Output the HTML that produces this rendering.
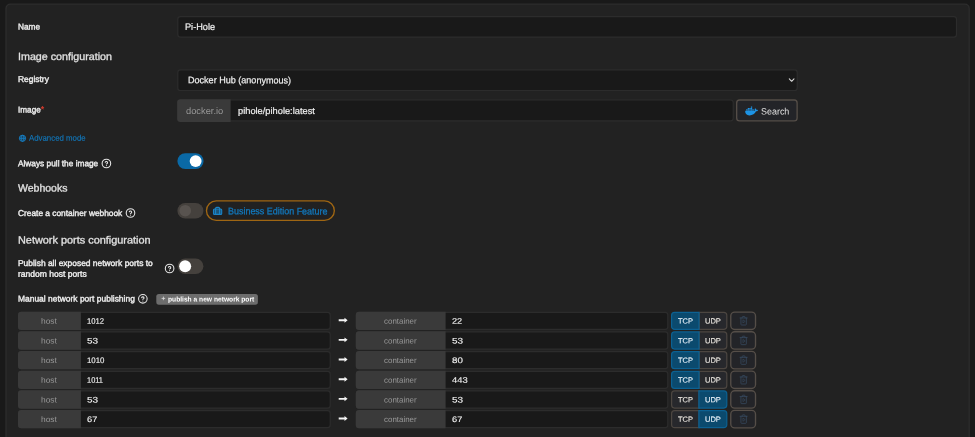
<!DOCTYPE html>
<html lang="en">
<head>
<meta charset="utf-8">
<title>Create container</title>
<style>
*{box-sizing:border-box;margin:0;padding:0}
html,body{width:975px;height:437px;overflow:hidden;background:#191919}
body{position:relative;font-family:"Liberation Sans",sans-serif;color:#e6e6e6}
.bg{position:absolute;left:0;top:0;display:block}
.txt{position:absolute;left:0;top:0;width:975px;height:437px;filter:blur(0.3px);text-rendering:geometricPrecision}
.t{position:absolute;transform-origin:0 0;white-space:nowrap;line-height:12px;height:12px}
.lbl{color:#ececec;-webkit-text-stroke:0.4px #ececec}
.h{color:#e2e2e2;-webkit-text-stroke:0.3px #e2e2e2}
.val{color:#f0f0f0;-webkit-text-stroke:0.2px #f0f0f0}
.val2{color:#e2e2e2}
.gray{color:#989898}
.pv{color:#f2f2f2;-webkit-text-stroke:0.12px #f2f2f2}
.blue{color:#1277ba;-webkit-text-stroke:0.3px #1277ba}
.adv{-webkit-text-stroke:0.15px #1277ba}
.req{color:#e23d2e;-webkit-text-stroke:0.15px #e23d2e;font-size:1.1em}
.pbt{color:#ffffff;font-weight:bold}
.son{color:#e4eef6;-webkit-text-stroke:0.15px #e4eef6}
.soff{color:#e6e2dc;-webkit-text-stroke:0.15px #e6e2dc}
</style>
</head>
<body>
<svg class="bg" width="975" height="437" viewBox="0 0 975 437">
<rect x="6" y="4.1" width="963.2" height="458.7" rx="4.35" fill="#222222" stroke="#2d2d2d" stroke-width="1.3"/>
<rect x="177.8" y="16.6" width="778.7" height="20.5" rx="2.6" fill="#191919" stroke="#2c2c2c" stroke-width="1.2"/>
<rect x="177.8" y="69.8" width="619.4" height="20.7" rx="2.6" fill="#191919" stroke="#2c2c2c" stroke-width="1.2"/>
<path d="M789.3 78.900 L791.650 81.300 L794 78.900" fill="none" stroke="#dcdcdc" stroke-width="1.050" stroke-linecap="round" stroke-linejoin="round"/>
<rect x="177.8" y="100" width="555.4" height="20.8" rx="2.6" fill="#191919" stroke="#2c2c2c" stroke-width="1.2"/>
<path d="M180.4 99.3H230.6V121.9H180.4A3.2 3.2 0 0 1 177.2 118.7V102.5A3.2 3.2 0 0 1 180.4 99.3z" fill="#3a3a3a"/>
<rect x="736.67" y="99.97" width="60.45" height="20.95" rx="2.92" fill="#232428" stroke="#544d47" stroke-width="1.35"/>
<rect x="177.4" y="153.2" width="26.2" height="15.8" rx="7.9" fill="#0a69a6"/>
<circle cx="195.65" cy="161.1" r="5.95" fill="#ffffff"/>
<rect x="177.4" y="202.9" width="26" height="15.6" rx="7.8" fill="#45413d"/>
<circle cx="185.25" cy="210.7" r="5.8" fill="#58534f"/>
<rect x="177.5" y="258.4" width="25.9" height="15.6" rx="7.8" fill="#45413d"/>
<circle cx="185.15" cy="266.2" r="6" fill="#ffffff"/>
<rect x="206.48" y="200.88" width="127.85" height="19.55" rx="9.77" fill="#212121" stroke="#9f6613" stroke-width="1.35"/>
<g fill="none" stroke="#1a84c7" stroke-width="1.1" stroke-linejoin="round"><rect x="213.5" y="209" width="8.2" height="5.4" rx="1" fill="#1a84c7" fill-opacity="0.55"/><path d="M215.6 214.4V208.4a1 1 0 0 1 1-1h2a1 1 0 0 1 1 1v6"/></g>
<rect x="156.3" y="293.9" width="101.6" height="10.8" rx="2.6" fill="#6d6d6d"/>
<path d="M161.6 298.4h3.6M163.4 296.6v3.6" stroke="#e0e0e0" stroke-width="0.8" fill="none"/>
<g transform="translate(101.55 158.65) scale(0.4042)" fill="none" stroke="#e6e6e6" stroke-width="2.700" stroke-linecap="round" stroke-linejoin="round"><circle cx="12" cy="12" r="10.600"/><path d="M9.100 9a3 3 0 0 1 5.800 1c0 2-3 3-3 3"/><path d="M12 17.200h.01"/></g>
<g transform="translate(125.65 208.15) scale(0.4042)" fill="none" stroke="#e6e6e6" stroke-width="2.700" stroke-linecap="round" stroke-linejoin="round"><circle cx="12" cy="12" r="10.600"/><path d="M9.100 9a3 3 0 0 1 5.800 1c0 2-3 3-3 3"/><path d="M12 17.200h.01"/></g>
<g transform="translate(164.75 263.65) scale(0.4042)" fill="none" stroke="#e6e6e6" stroke-width="2.700" stroke-linecap="round" stroke-linejoin="round"><circle cx="12" cy="12" r="10.600"/><path d="M9.100 9a3 3 0 0 1 5.800 1c0 2-3 3-3 3"/><path d="M12 17.200h.01"/></g>
<g transform="translate(138 294) scale(0.4042)" fill="none" stroke="#e6e6e6" stroke-width="2.700" stroke-linecap="round" stroke-linejoin="round"><circle cx="12" cy="12" r="10.600"/><path d="M9.100 9a3 3 0 0 1 5.800 1c0 2-3 3-3 3"/><path d="M12 17.200h.01"/></g>
<g transform="translate(18.900 134.700) scale(0.3)" fill="none" stroke="#167cc0" stroke-width="3.200"><circle cx="12" cy="12" r="10.400" fill="#167cc0" fill-opacity="0.3"/><path d="M1.500 12h21M12 1.500c3.200 3.200 4.200 6.800 4.200 10.500s-1 7.300-4.200 10.500c-3.200-3.200-4.200-6.800-4.200-10.500s1-7.300 4.200-10.500z"/></g>
<g transform="translate(745.200 105.800) scale(0.02)" fill="#1d94e6"><path d="M349.900 236.300h-66.100v-59.400h66.100v59.400zm0-204.300h-66.100v60.700h66.100V32zm78.200 144.800H362v59.400h66.100v-59.400zm-156.300-72.100h-66.100v60.100h66.100v-60.100zm78.100 0h-66.100v60.100h66.100v-60.100zm276.800 100c-14.400-9.700-47.600-13.200-73.100-8.400-3.300-24-16.700-44.900-41.100-63.700l-14-9.300-9.300 14c-18.400 27.800-23.400 73.600-3.700 103.800-8.700 4.700-25.800 11.100-48.400 10.700H2.400c-8.700 50.800 5.800 116.800 44 162.100 37.100 43.900 92.700 66.200 165.400 66.200 157.400 0 273.900-72.500 328.400-204.200 21.400.4 67.600.1 91.300-45.200 1.500-2.500 6.600-13.200 8.500-17.100l-13.300-8.900zm-511.100-27.900h-66v59.400h66.100v-59.400zm78.100 0h-66.100v59.400h66.100v-59.400zm78.100 0h-66.100v59.400h66.100v-59.400zm-78.100-72.100h-66.100v60.100h66.100v-60.100z"/></g>
<rect x="18.6" y="312.3" width="311.6" height="17.1" rx="2.6" fill="#191919" stroke="#2c2c2c" stroke-width="1.2"/>
<path d="M21.2 311.7H80.9V330H21.2A3.2 3.2 0 0 1 18 326.8V314.9A3.2 3.2 0 0 1 21.2 311.7z" fill="#3a3a3a"/>
<rect x="356.4" y="312.3" width="311.4" height="17.1" rx="2.6" fill="#191919" stroke="#2c2c2c" stroke-width="1.2"/>
<path d="M359 311.7H445.6V330H359A3.2 3.2 0 0 1 355.8 326.8V314.9A3.2 3.2 0 0 1 359 311.7z" fill="#3a3a3a"/>
<path d="M338.700 319.25H344.500V317.75L347.600 320.2L344.500 322.65V321.15H338.700z" fill="#f4f4f4"/>
<path d="M699.3 312.3H723.8A3 3 0 0 1 726.8 315.3V326.4A3 3 0 0 1 723.8 329.4H699.3z" fill="#27282c" stroke="#4c4641" stroke-width="1.2"/>
<path d="M699 312.3H674.6A3 3 0 0 0 671.6 315.3V326.4A3 3 0 0 0 674.6 329.4H699z" fill="#0b4a6e" stroke="#0c6192" stroke-width="1.2"/>
<rect x="730.77" y="312.07" width="24.75" height="17.45" rx="3.92" fill="#232428" stroke="#554e48" stroke-width="1.35"/>
<g transform="translate(739.300 316) scale(0.36)" fill="none" stroke="#384c62" stroke-width="2.100" stroke-linecap="round" stroke-linejoin="round"><path d="M2 5.500h20"/><path d="M19.500 5.500v17.500a2 2 0 0 1-2 2h-11a2 2 0 0 1-2-2V5.500"/><path d="M8 5.500V3.500a2 2 0 0 1 2-2h4a2 2 0 0 1 2 2v2"/><path d="M10 11.500v8l5.500-4z" stroke-width="1.600"/></g>
<rect x="18.6" y="331.96" width="311.6" height="17.1" rx="2.6" fill="#191919" stroke="#2c2c2c" stroke-width="1.2"/>
<path d="M21.2 331.36H80.9V349.66H21.2A3.2 3.2 0 0 1 18 346.46V334.56A3.2 3.2 0 0 1 21.2 331.36z" fill="#3a3a3a"/>
<rect x="356.4" y="331.96" width="311.4" height="17.1" rx="2.6" fill="#191919" stroke="#2c2c2c" stroke-width="1.2"/>
<path d="M359 331.36H445.6V349.66H359A3.2 3.2 0 0 1 355.8 346.46V334.56A3.2 3.2 0 0 1 359 331.36z" fill="#3a3a3a"/>
<path d="M338.700 338.91H344.500V337.41L347.600 339.86L344.500 342.31V340.81H338.700z" fill="#f4f4f4"/>
<path d="M699.3 331.96H723.8A3 3 0 0 1 726.8 334.96V346.06A3 3 0 0 1 723.8 349.06H699.3z" fill="#27282c" stroke="#4c4641" stroke-width="1.2"/>
<path d="M699 331.96H674.6A3 3 0 0 0 671.6 334.96V346.06A3 3 0 0 0 674.6 349.06H699z" fill="#0b4a6e" stroke="#0c6192" stroke-width="1.2"/>
<rect x="730.77" y="331.74" width="24.75" height="17.45" rx="3.92" fill="#232428" stroke="#554e48" stroke-width="1.35"/>
<g transform="translate(739.300 335.66) scale(0.36)" fill="none" stroke="#384c62" stroke-width="2.100" stroke-linecap="round" stroke-linejoin="round"><path d="M2 5.500h20"/><path d="M19.500 5.500v17.500a2 2 0 0 1-2 2h-11a2 2 0 0 1-2-2V5.500"/><path d="M8 5.500V3.500a2 2 0 0 1 2-2h4a2 2 0 0 1 2 2v2"/><path d="M10 11.500v8l5.500-4z" stroke-width="1.600"/></g>
<rect x="18.6" y="351.62" width="311.6" height="17.1" rx="2.6" fill="#191919" stroke="#2c2c2c" stroke-width="1.2"/>
<path d="M21.2 351.02H80.9V369.32H21.2A3.2 3.2 0 0 1 18 366.12V354.22A3.2 3.2 0 0 1 21.2 351.02z" fill="#3a3a3a"/>
<rect x="356.4" y="351.62" width="311.4" height="17.1" rx="2.6" fill="#191919" stroke="#2c2c2c" stroke-width="1.2"/>
<path d="M359 351.02H445.6V369.32H359A3.2 3.2 0 0 1 355.8 366.12V354.22A3.2 3.2 0 0 1 359 351.02z" fill="#3a3a3a"/>
<path d="M338.700 358.57H344.500V357.07L347.600 359.52L344.500 361.97V360.47H338.700z" fill="#f4f4f4"/>
<path d="M699.3 351.62H723.8A3 3 0 0 1 726.8 354.62V365.72A3 3 0 0 1 723.8 368.72H699.3z" fill="#27282c" stroke="#4c4641" stroke-width="1.2"/>
<path d="M699 351.62H674.6A3 3 0 0 0 671.6 354.62V365.72A3 3 0 0 0 674.6 368.72H699z" fill="#0b4a6e" stroke="#0c6192" stroke-width="1.2"/>
<rect x="730.77" y="351.39" width="24.75" height="17.45" rx="3.92" fill="#232428" stroke="#554e48" stroke-width="1.35"/>
<g transform="translate(739.300 355.32) scale(0.36)" fill="none" stroke="#384c62" stroke-width="2.100" stroke-linecap="round" stroke-linejoin="round"><path d="M2 5.500h20"/><path d="M19.500 5.500v17.500a2 2 0 0 1-2 2h-11a2 2 0 0 1-2-2V5.500"/><path d="M8 5.500V3.500a2 2 0 0 1 2-2h4a2 2 0 0 1 2 2v2"/><path d="M10 11.500v8l5.500-4z" stroke-width="1.600"/></g>
<rect x="18.6" y="371.28" width="311.6" height="17.1" rx="2.6" fill="#191919" stroke="#2c2c2c" stroke-width="1.2"/>
<path d="M21.2 370.68H80.9V388.98H21.2A3.2 3.2 0 0 1 18 385.78V373.88A3.2 3.2 0 0 1 21.2 370.68z" fill="#3a3a3a"/>
<rect x="356.4" y="371.28" width="311.4" height="17.1" rx="2.6" fill="#191919" stroke="#2c2c2c" stroke-width="1.2"/>
<path d="M359 370.68H445.6V388.98H359A3.2 3.2 0 0 1 355.8 385.78V373.88A3.2 3.2 0 0 1 359 370.68z" fill="#3a3a3a"/>
<path d="M338.700 378.23H344.500V376.73L347.600 379.18L344.500 381.63V380.13H338.700z" fill="#f4f4f4"/>
<path d="M699.3 371.28H723.8A3 3 0 0 1 726.8 374.28V385.38A3 3 0 0 1 723.8 388.38H699.3z" fill="#27282c" stroke="#4c4641" stroke-width="1.2"/>
<path d="M699 371.28H674.6A3 3 0 0 0 671.6 374.28V385.38A3 3 0 0 0 674.6 388.38H699z" fill="#0b4a6e" stroke="#0c6192" stroke-width="1.2"/>
<rect x="730.77" y="371.06" width="24.75" height="17.45" rx="3.92" fill="#232428" stroke="#554e48" stroke-width="1.35"/>
<g transform="translate(739.300 374.98) scale(0.36)" fill="none" stroke="#384c62" stroke-width="2.100" stroke-linecap="round" stroke-linejoin="round"><path d="M2 5.500h20"/><path d="M19.500 5.500v17.500a2 2 0 0 1-2 2h-11a2 2 0 0 1-2-2V5.500"/><path d="M8 5.500V3.500a2 2 0 0 1 2-2h4a2 2 0 0 1 2 2v2"/><path d="M10 11.500v8l5.500-4z" stroke-width="1.600"/></g>
<rect x="18.6" y="390.94" width="311.6" height="17.1" rx="2.6" fill="#191919" stroke="#2c2c2c" stroke-width="1.2"/>
<path d="M21.2 390.34H80.9V408.64H21.2A3.2 3.2 0 0 1 18 405.44V393.54A3.2 3.2 0 0 1 21.2 390.34z" fill="#3a3a3a"/>
<rect x="356.4" y="390.94" width="311.4" height="17.1" rx="2.6" fill="#191919" stroke="#2c2c2c" stroke-width="1.2"/>
<path d="M359 390.34H445.6V408.64H359A3.2 3.2 0 0 1 355.8 405.44V393.54A3.2 3.2 0 0 1 359 390.34z" fill="#3a3a3a"/>
<path d="M338.700 397.89H344.500V396.39L347.600 398.84L344.500 401.29V399.79H338.700z" fill="#f4f4f4"/>
<path d="M699.2 390.94H674.6A3 3 0 0 0 671.6 393.94V405.04A3 3 0 0 0 674.6 408.04H699.2z" fill="#27282c" stroke="#4c4641" stroke-width="1.2"/>
<path d="M698.9 390.94H723.8A3 3 0 0 1 726.8 393.94V405.04A3 3 0 0 1 723.8 408.04H698.9z" fill="#0b4a6e" stroke="#0c6192" stroke-width="1.2"/>
<rect x="730.77" y="390.71" width="24.75" height="17.45" rx="3.92" fill="#232428" stroke="#554e48" stroke-width="1.35"/>
<g transform="translate(739.300 394.64) scale(0.36)" fill="none" stroke="#384c62" stroke-width="2.100" stroke-linecap="round" stroke-linejoin="round"><path d="M2 5.500h20"/><path d="M19.500 5.500v17.500a2 2 0 0 1-2 2h-11a2 2 0 0 1-2-2V5.500"/><path d="M8 5.500V3.500a2 2 0 0 1 2-2h4a2 2 0 0 1 2 2v2"/><path d="M10 11.500v8l5.500-4z" stroke-width="1.600"/></g>
<rect x="18.6" y="410.6" width="311.6" height="17.1" rx="2.6" fill="#191919" stroke="#2c2c2c" stroke-width="1.2"/>
<path d="M21.2 410H80.9V428.3H21.2A3.2 3.2 0 0 1 18 425.1V413.2A3.2 3.2 0 0 1 21.2 410z" fill="#3a3a3a"/>
<rect x="356.4" y="410.6" width="311.4" height="17.1" rx="2.6" fill="#191919" stroke="#2c2c2c" stroke-width="1.2"/>
<path d="M359 410H445.6V428.3H359A3.2 3.2 0 0 1 355.8 425.1V413.2A3.2 3.2 0 0 1 359 410z" fill="#3a3a3a"/>
<path d="M338.700 417.55H344.500V416.05L347.600 418.5L344.500 420.95V419.45H338.700z" fill="#f4f4f4"/>
<path d="M699.2 410.6H674.6A3 3 0 0 0 671.6 413.6V424.7A3 3 0 0 0 674.6 427.7H699.2z" fill="#27282c" stroke="#4c4641" stroke-width="1.2"/>
<path d="M698.9 410.6H723.8A3 3 0 0 1 726.8 413.6V424.7A3 3 0 0 1 723.8 427.7H698.9z" fill="#0b4a6e" stroke="#0c6192" stroke-width="1.2"/>
<rect x="730.77" y="410.38" width="24.75" height="17.45" rx="3.92" fill="#232428" stroke="#554e48" stroke-width="1.35"/>
<g transform="translate(739.300 414.3) scale(0.36)" fill="none" stroke="#384c62" stroke-width="2.100" stroke-linecap="round" stroke-linejoin="round"><path d="M2 5.500h20"/><path d="M19.500 5.500v17.500a2 2 0 0 1-2 2h-11a2 2 0 0 1-2-2V5.500"/><path d="M8 5.500V3.500a2 2 0 0 1 2-2h4a2 2 0 0 1 2 2v2"/><path d="M10 11.500v8l5.500-4z" stroke-width="1.600"/></g>
</svg>
<div class="txt">
<div class="t lbl" id="l1" style="left:17.8px;top:20px;font-size:8.5px;transform:translateY(0.38px) rotate(0.04deg) scaleX(0.973)">Name</div>
<div class="t h" id="h1" style="left:17.6px;top:51px;font-size:10.4px;transform:translateY(0.93px) rotate(0.04deg) scaleX(1.03)">Image configuration</div>
<div class="t lbl" id="l2" style="left:17.9px;top:72px;font-size:8.5px;transform:translateY(0.98px) rotate(0.04deg) scaleX(0.99)">Registry</div>
<div class="t lbl" id="l3" style="left:17.9px;top:103px;font-size:8.5px;transform:translateY(0.58px) rotate(0.04deg) scaleX(0.964)">Image<span class="req">*</span></div>
<div class="t blue adv" id="adv" style="left:28.9px;top:131px;font-size:8.3px;transform:translateY(0.76px) rotate(0.04deg) scaleX(0.945)">Advanced mode</div>
<div class="t lbl" id="l4" style="left:17.9px;top:157px;font-size:8.5px;transform:translateY(0.14px) rotate(0.04deg) scaleX(0.976)">Always pull the image</div>
<div class="t h" id="h2" style="left:18.1px;top:183px;font-size:10.4px;transform:translateY(0.56px) rotate(0.04deg) scaleX(1.012)">Webhooks</div>
<div class="t lbl" id="l5" style="left:17.9px;top:206px;font-size:8.5px;transform:translateY(0.93px) rotate(0.04deg) scaleX(0.981)">Create a container webhook</div>
<div class="t h" id="h3" style="left:18.1px;top:235px;font-size:10.4px;transform:translateY(0.51px) rotate(0.04deg) scaleX(1.048)">Network ports configuration</div>
<div class="t lbl" id="l6" style="left:17.9px;top:256px;font-size:8.5px;transform:translateY(0.91px) rotate(0.04deg) scaleX(0.99)">Publish all exposed network ports to</div>
<div class="t lbl" id="l7" style="left:17.9px;top:267px;font-size:8.5px;transform:translateY(0.75px) rotate(0.04deg) scaleX(1.003)">random host ports</div>
<div class="t lbl" id="l8" style="left:17.9px;top:292px;font-size:8.5px;transform:translateY(0.52px) rotate(0.04deg) scaleX(0.993)">Manual network port publishing</div>
<div class="t val" id="v1" style="left:185.3px;top:21px;font-size:9.4px;transform:translateY(0.08px) rotate(0.04deg) scaleX(0.978)">Pi-Hole</div>
<div class="t val" id="v2" style="left:188.1px;top:74px;font-size:9.4px;transform:translateY(0.33px) rotate(0.04deg) scaleX(0.965)">Docker Hub (anonymous)</div>
<div class="t gray" id="a1" style="left:185.7px;top:104px;font-size:9.3px;transform:translateY(0.97px) rotate(0.04deg) scaleX(1.002)">docker.io</div>
<div class="t val" id="v3" style="left:237.7px;top:104px;font-size:9.3px;transform:translateY(0.95px) rotate(0.04deg) scaleX(0.998)">pihole/pihole:latest</div>
<div class="t val2" id="sb" style="left:761px;top:105px;font-size:9.2px;transform:translateY(0.48px) rotate(0.04deg) scaleX(0.974)">Search</div>
<div class="t blue" id="be" style="left:227.7px;top:206px;font-size:9.5px;transform:translateY(0.33px) rotate(0.04deg) scaleX(0.942)">Business Edition Feature</div>
<div class="t pbt" id="pb" style="left:167.8px;top:294px;font-size:6.9px;transform:translateY(0.44px) rotate(0.04deg) scaleX(0.967)">publish a new network port</div>
<div class="t gray" id="rh0" style="left:41.4px;top:315px;font-size:8px;transform:translateY(0.79px) rotate(0.04deg) scaleX(1.053)">host</div>
<div class="t pv" id="rp0" style="left:86.9px;top:315px;font-size:8px;transform:translateY(0.79px) rotate(0.04deg) scaleX(0.963)">1012</div>
<div class="t gray" id="rc0" style="left:384.1px;top:315px;font-size:7.9px;transform:translateY(0.78px) rotate(0.04deg) scaleX(1.007)">container</div>
<div class="t pv" id="rq0" style="left:451.8px;top:315px;font-size:8px;transform:translateY(0.79px) rotate(0.04deg) scaleX(1.147)">22</div>
<div class="t son" id="rt0" style="left:677.9px;top:315px;font-size:7.5px;transform:translateY(0.49px) rotate(0.04deg) scaleX(0.993)">TCP</div>
<div class="t soff" id="ru0" style="left:704.9px;top:315px;font-size:7.5px;transform:translateY(0.49px) rotate(0.04deg) scaleX(1.003)">UDP</div>
<div class="t gray" id="rh1" style="left:41.4px;top:335px;font-size:8px;transform:translateY(0.45px) rotate(0.04deg) scaleX(1.053)">host</div>
<div class="t pv" id="rp1" style="left:86.9px;top:335px;font-size:8px;transform:translateY(0.45px) rotate(0.04deg) scaleX(1.241)">53</div>
<div class="t gray" id="rc1" style="left:384.1px;top:335px;font-size:7.9px;transform:translateY(0.44px) rotate(0.04deg) scaleX(1.007)">container</div>
<div class="t pv" id="rq1" style="left:451.8px;top:335px;font-size:8px;transform:translateY(0.45px) rotate(0.04deg) scaleX(1.241)">53</div>
<div class="t son" id="rt1" style="left:677.9px;top:335px;font-size:7.5px;transform:translateY(0.15px) rotate(0.04deg) scaleX(0.993)">TCP</div>
<div class="t soff" id="ru1" style="left:704.9px;top:335px;font-size:7.5px;transform:translateY(0.15px) rotate(0.04deg) scaleX(1.003)">UDP</div>
<div class="t gray" id="rh2" style="left:41.4px;top:355px;font-size:8px;transform:translateY(0.11px) rotate(0.04deg) scaleX(1.053)">host</div>
<div class="t pv" id="rp2" style="left:86.9px;top:355px;font-size:8px;transform:translateY(0.11px) rotate(0.04deg) scaleX(0.981)">1010</div>
<div class="t gray" id="rc2" style="left:384.1px;top:355px;font-size:7.9px;transform:translateY(0.1px) rotate(0.04deg) scaleX(1.007)">container</div>
<div class="t pv" id="rq2" style="left:451.8px;top:355px;font-size:8px;transform:translateY(0.11px) rotate(0.04deg) scaleX(1.214)">80</div>
<div class="t son" id="rt2" style="left:677.9px;top:354px;font-size:7.5px;transform:translateY(0.81px) rotate(0.04deg) scaleX(0.993)">TCP</div>
<div class="t soff" id="ru2" style="left:704.9px;top:354px;font-size:7.5px;transform:translateY(0.81px) rotate(0.04deg) scaleX(1.003)">UDP</div>
<div class="t gray" id="rh3" style="left:41.4px;top:374px;font-size:8px;transform:translateY(0.77px) rotate(0.04deg) scaleX(1.053)">host</div>
<div class="t pv" id="rp3" style="left:86.9px;top:374px;font-size:8px;transform:translateY(0.77px) rotate(0.04deg) scaleX(0.929)">1011</div>
<div class="t gray" id="rc3" style="left:384.1px;top:374px;font-size:7.9px;transform:translateY(0.76px) rotate(0.04deg) scaleX(1.007)">container</div>
<div class="t pv" id="rq3" style="left:451.8px;top:374px;font-size:8px;transform:translateY(0.77px) rotate(0.04deg) scaleX(1.172)">443</div>
<div class="t son" id="rt3" style="left:677.9px;top:374px;font-size:7.5px;transform:translateY(0.47px) rotate(0.04deg) scaleX(0.993)">TCP</div>
<div class="t soff" id="ru3" style="left:704.9px;top:374px;font-size:7.5px;transform:translateY(0.47px) rotate(0.04deg) scaleX(1.003)">UDP</div>
<div class="t gray" id="rh4" style="left:41.4px;top:394px;font-size:8px;transform:translateY(0.43px) rotate(0.04deg) scaleX(1.053)">host</div>
<div class="t pv" id="rp4" style="left:86.9px;top:394px;font-size:8px;transform:translateY(0.43px) rotate(0.04deg) scaleX(1.241)">53</div>
<div class="t gray" id="rc4" style="left:384.1px;top:394px;font-size:7.9px;transform:translateY(0.42px) rotate(0.04deg) scaleX(1.007)">container</div>
<div class="t pv" id="rq4" style="left:451.8px;top:394px;font-size:8px;transform:translateY(0.43px) rotate(0.04deg) scaleX(1.241)">53</div>
<div class="t soff" id="rt4" style="left:677.9px;top:394px;font-size:7.5px;transform:translateY(0.13px) rotate(0.04deg) scaleX(0.993)">TCP</div>
<div class="t son" id="ru4" style="left:704.9px;top:394px;font-size:7.5px;transform:translateY(0.13px) rotate(0.04deg) scaleX(1.003)">UDP</div>
<div class="t gray" id="rh5" style="left:41.4px;top:414px;font-size:8px;transform:translateY(0.09px) rotate(0.04deg) scaleX(1.053)">host</div>
<div class="t pv" id="rp5" style="left:86.9px;top:414px;font-size:8px;transform:translateY(0.09px) rotate(0.04deg) scaleX(1.16)">67</div>
<div class="t gray" id="rc5" style="left:384.1px;top:414px;font-size:7.9px;transform:translateY(0.08px) rotate(0.04deg) scaleX(1.007)">container</div>
<div class="t pv" id="rq5" style="left:451.8px;top:414px;font-size:8px;transform:translateY(0.09px) rotate(0.04deg) scaleX(1.16)">67</div>
<div class="t soff" id="rt5" style="left:677.9px;top:413px;font-size:7.5px;transform:translateY(0.79px) rotate(0.04deg) scaleX(0.993)">TCP</div>
<div class="t son" id="ru5" style="left:704.9px;top:413px;font-size:7.5px;transform:translateY(0.79px) rotate(0.04deg) scaleX(1.003)">UDP</div>
</div>
</body>
</html>
